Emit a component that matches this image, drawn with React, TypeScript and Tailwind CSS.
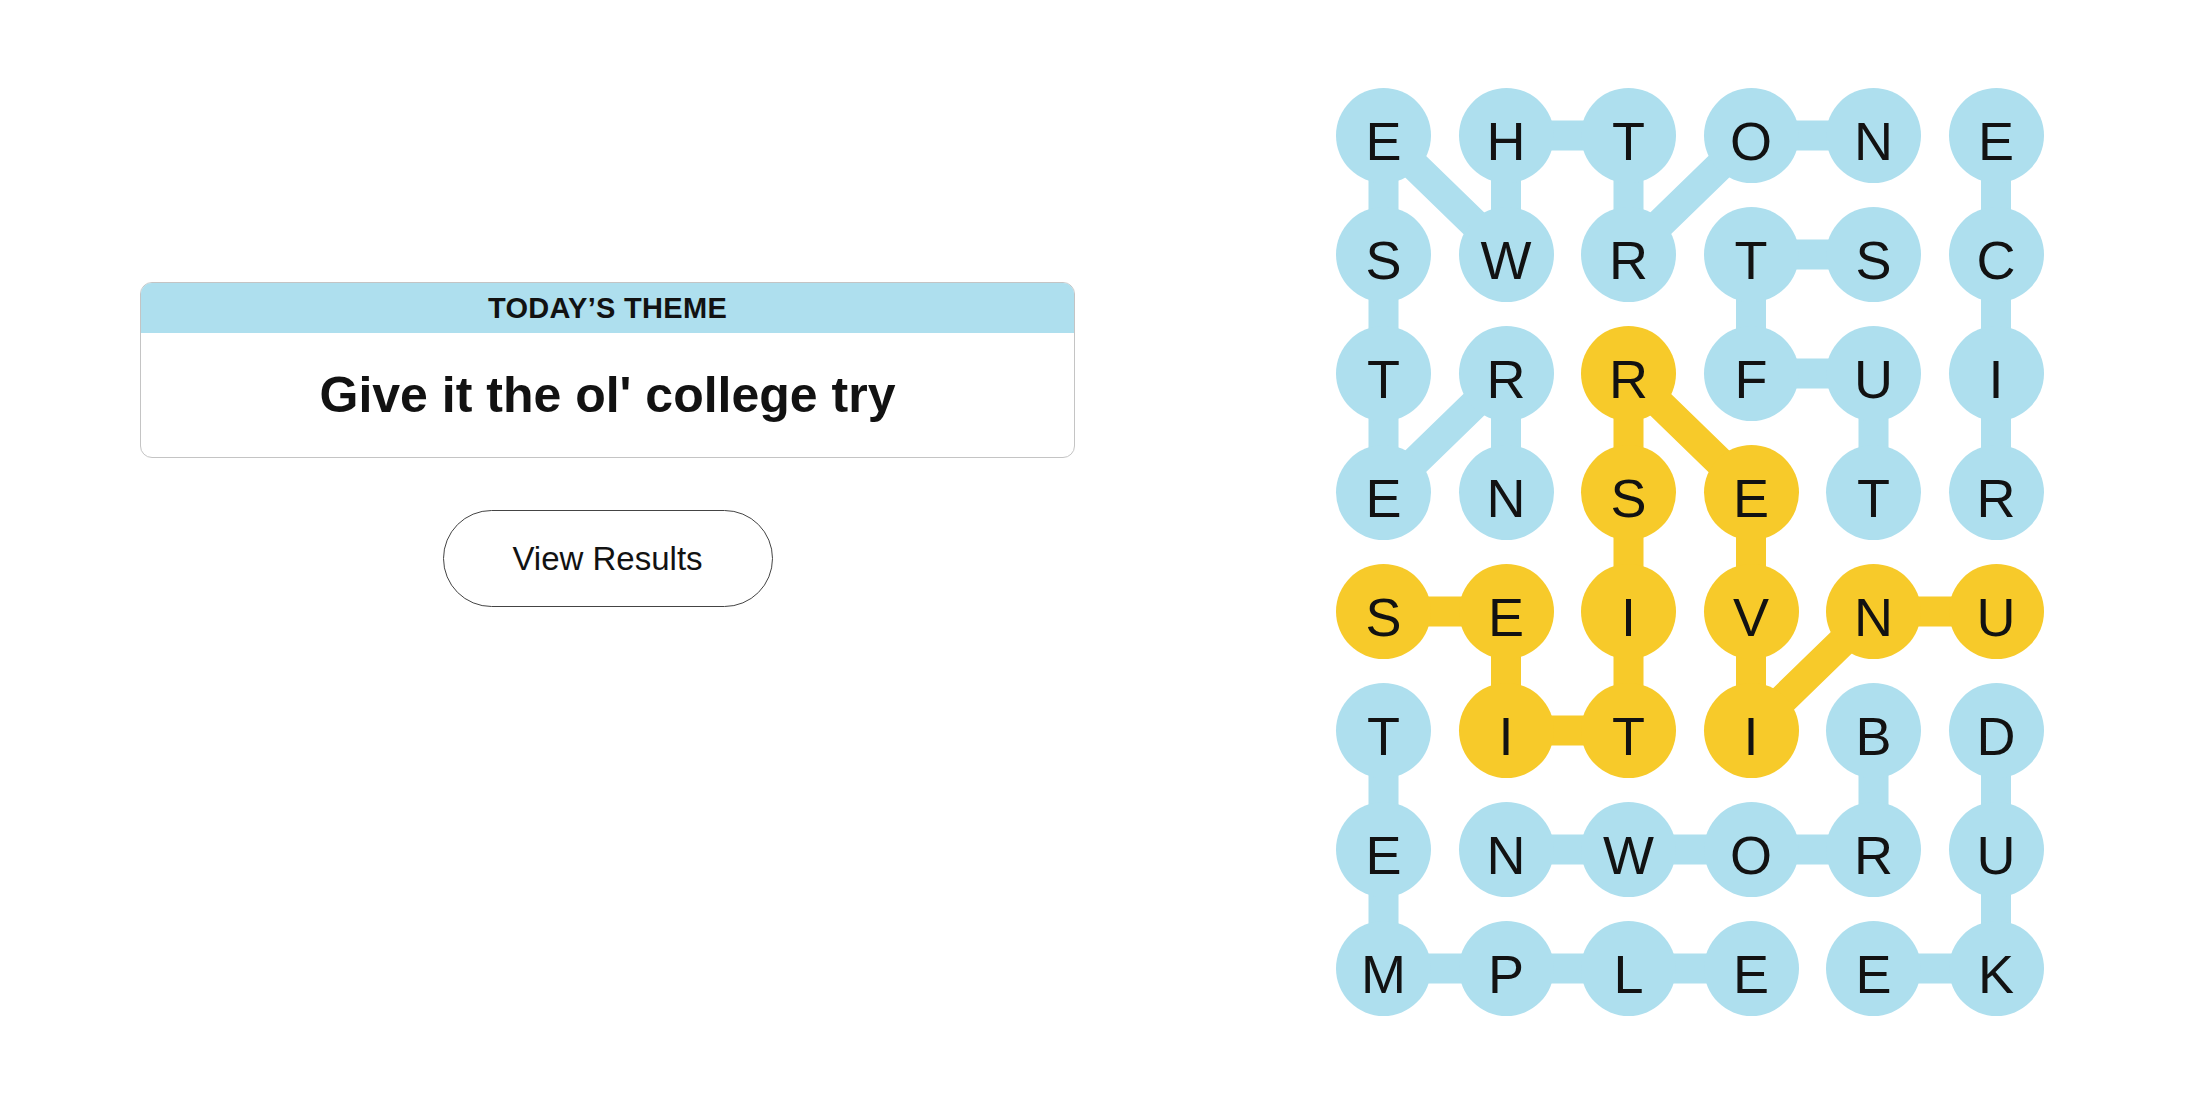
const BLUE = '#aedfee';
const GOLD = '#f7ca2a';

const ROWS = ['EHTONE', 'SWRTSC', 'TRRFUI', 'ENSETR', 'SEIVNU', 'TITIBD', 'ENWORU', 'MPLEEK'];

const SPANGRAM: [number, number][] = [
  [4, 5], [4, 4], [5, 3], [4, 3], [3, 3], [2, 2], [3, 2], [4, 2], [5, 2], [5, 1], [4, 1], [4, 0],
];

const WORDS: [number, number][][] = [
  // northwestern
  [[3, 1], [2, 1], [3, 0], [2, 0], [1, 0], [0, 0], [1, 1], [0, 1], [0, 2], [1, 2], [0, 3], [0, 4]],
  // tufts
  [[3, 4], [2, 4], [2, 3], [1, 3], [1, 4]],
  // rice
  [[3, 5], [2, 5], [1, 5], [0, 5]],
  // temple
  [[5, 0], [6, 0], [7, 0], [7, 1], [7, 2], [7, 3]],
  // brown
  [[5, 4], [6, 4], [6, 3], [6, 2], [6, 1]],
  // duke
  [[5, 5], [6, 5], [7, 5], [7, 4]],
];

const CELL = 95;
const COL_STEP = 122.5;
const ROW_STEP = 119;

const cx = (c: number) => CELL / 2 + c * COL_STEP;
const cy = (r: number) => CELL / 2 + r * ROW_STEP;

function isGold(r: number, c: number) {
  return SPANGRAM.some(([a, b]) => a === r && b === c);
}

function Path({ cells, color }: { cells: [number, number][]; color: string }) {
  const d = cells.map(([r, c], i) => `${i === 0 ? 'M' : 'L'}${cx(c)} ${cy(r)}`).join(' ');
  return <path d={d} fill="none" stroke={color} strokeWidth={30} strokeLinejoin="round" />;
}

function Board() {
  return (
    <div className="relative w-[707.5px]">
      <svg className="absolute inset-0 h-full w-full" viewBox="0 0 707.5 928">
        {WORDS.map((w, i) => (
          <Path key={i} cells={w} color={BLUE} />
        ))}
        <Path cells={SPANGRAM} color={GOLD} />
      </svg>
      <div className="relative grid grid-cols-[repeat(6,95px)] gap-x-[27.5px] gap-y-[24px]">
        {ROWS.flatMap((row, r) =>
          row.split('').map((ch, c) => (
            <div
              key={`${r}-${c}`}
              className={`flex h-[95px] w-[95px] items-center justify-center rounded-full pt-[10px] text-[54px] leading-none text-[#121212] ${
                isGold(r, c) ? 'bg-[#f7ca2a]' : 'bg-[#aedfee]'
              }`}
            >
              {ch}
            </div>
          )),
        )}
      </div>
    </div>
  );
}

export default function App() {
  return (
    <div className="flex min-h-[1100px] w-full bg-white font-['Liberation_Sans',Arial,sans-serif] text-[#121212]">
      <div className="flex w-[1075px] flex-col items-center pl-[140px] pt-[282px]">
        <div className="w-full overflow-hidden rounded-[12px] border border-[#c4c4c4]">
          <div className="flex h-[50px] items-center justify-center bg-[#aedfee] pt-[2px] text-[29px] font-bold tracking-[0.3px]">
            TODAY’S THEME
          </div>
          <div className="flex h-[124px] items-center justify-center text-[50px] font-bold">
            Give it the ol' college try
          </div>
        </div>
        <button className="mt-[52px] h-[97px] w-[330px] rounded-full border-[1.5px] border-[#444] bg-white text-[33px] text-[#121212]">
          View Results
        </button>
      </div>
      <div className="ml-[261px] pt-[88px]">
        <Board />
      </div>
    </div>
  );
}
